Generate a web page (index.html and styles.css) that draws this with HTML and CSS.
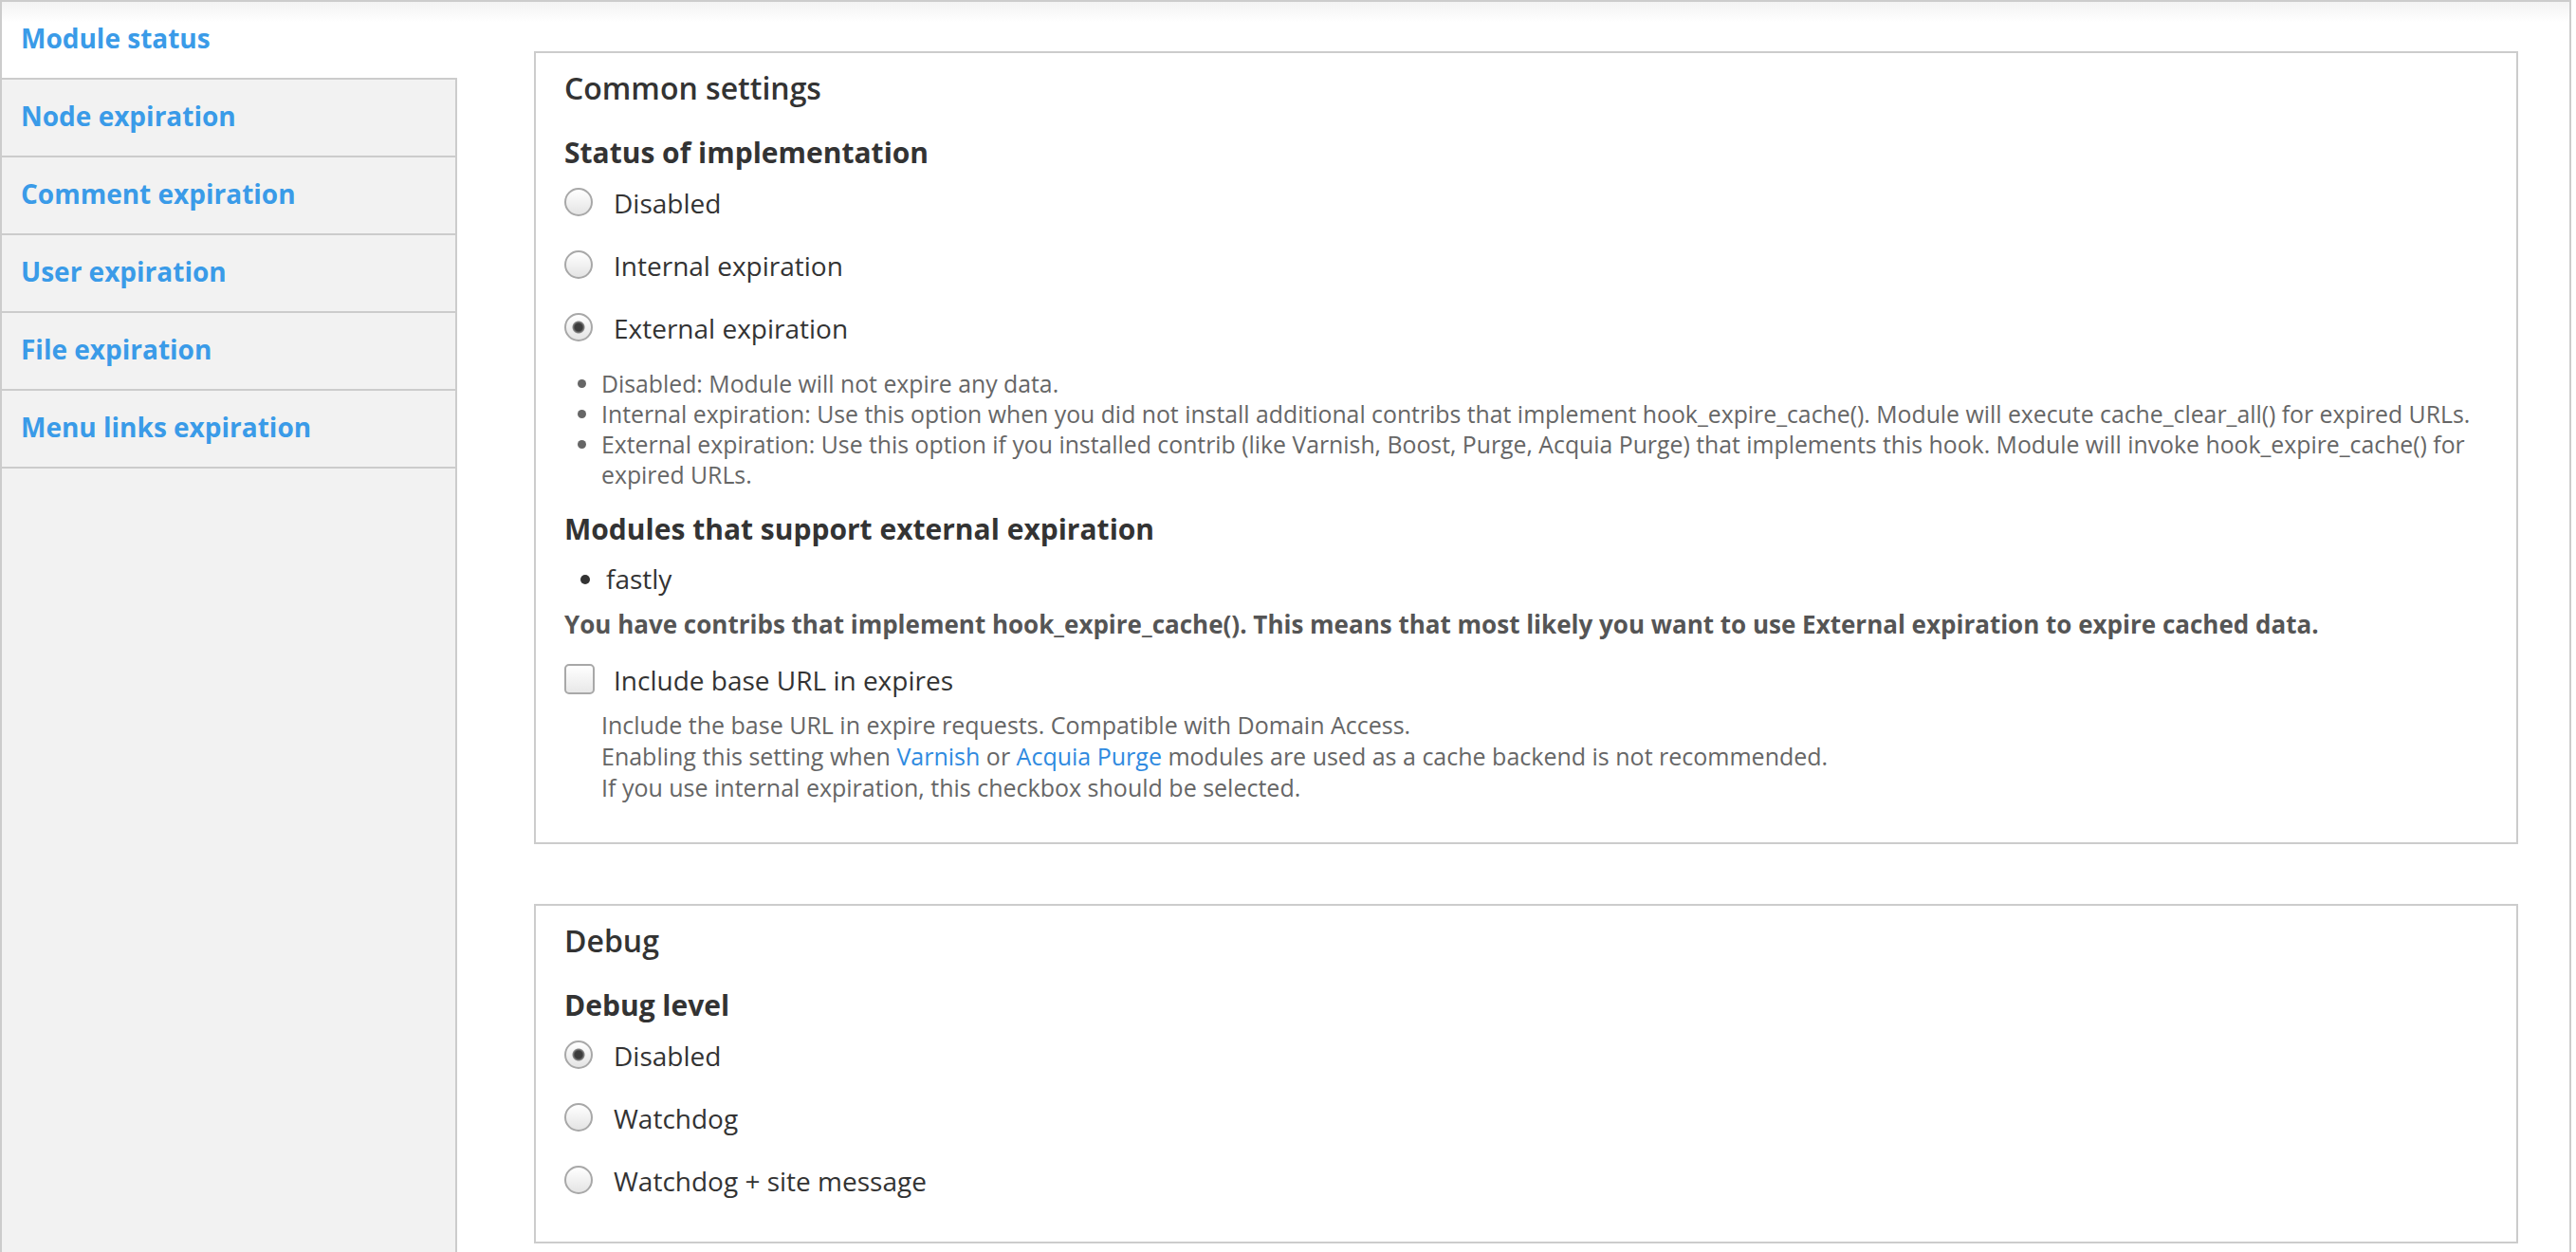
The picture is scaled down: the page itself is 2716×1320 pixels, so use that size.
FILE: index.html
```html
<!DOCTYPE html>
<html lang="en">
<head>
  <meta charset="UTF-8">
  <title>Cache Expiration</title>
  <link rel="stylesheet" href="styles.css">
</head>
<body>
  <div class="page">
    <ul class="tabs">
      <li class="tab active"><a href="#">Module status</a></li>
      <li class="tab"><a href="#">Node expiration</a></li>
      <li class="tab"><a href="#">Comment expiration</a></li>
      <li class="tab"><a href="#">User expiration</a></li>
      <li class="tab"><a href="#">File expiration</a></li>
      <li class="tab"><a href="#">Menu links expiration</a></li>
    </ul>

    <div class="pane">
      <div class="box box-common">
        <h2 class="legend">Common settings</h2>
        <div class="label">Status of implementation</div>
        <div class="options">
          <label class="option"><input type="radio" name="status"> Disabled</label>
          <label class="option"><input type="radio" name="status"> Internal expiration</label>
          <label class="option"><input type="radio" name="status" checked> External expiration</label>
        </div>
        <ul class="help">
          <li>Disabled: Module will not expire any data.</li>
          <li>Internal expiration: Use this option when you did not install additional contribs that implement hook_expire_cache(). Module will execute cache_clear_all() for expired URLs.</li>
          <li>External expiration: Use this option if you installed contrib (like Varnish, Boost, Purge, Acquia Purge) that implements this hook. Module will invoke hook_expire_cache() for expired URLs.</li>
        </ul>
        <div class="label label-modules">Modules that support external expiration</div>
        <ul class="modules">
          <li>fastly</li>
        </ul>
        <p class="notice">You have contribs that implement hook_expire_cache(). This means that most likely you want to use External expiration to expire cached data.</p>
        <label class="option check"><input type="checkbox"> Include base URL in expires</label>
        <div class="description">
          Include the base URL in expire requests. Compatible with Domain Access.<br>
          Enabling this setting when <a href="#">Varnish</a> or <a href="#">Acquia Purge</a> modules are used as a cache backend is not recommended.<br>
          If you use internal expiration, this checkbox should be selected.
        </div>
      </div>

      <div class="box box-debug">
        <h2 class="legend">Debug</h2>
        <div class="label">Debug level</div>
        <div class="options">
          <label class="option"><input type="radio" name="debug" checked> Disabled</label>
          <label class="option"><input type="radio" name="debug"> Watchdog</label>
          <label class="option"><input type="radio" name="debug"> Watchdog + site message</label>
        </div>
      </div>
    </div>
  </div>
</body>
</html>
```

FILE: styles.css
```css
* {
  box-sizing: border-box;
}

body {
  margin: 0;
  font-family: "Open Sans", sans-serif;
  color: #333;
  background: #fff;
}

.page {
  display: flex;
  min-height: 100vh;
  margin-right: 5px;
  border: 2px solid #ccc;
  border-bottom: none;
}

/* vertical tabs */
.tabs {
  flex: none;
  width: 480px;
  margin: 0;
  padding: 0;
  list-style: none;
  background: #f2f2f2;
  border-right: 2px solid #ccc;
}

.tab {
  border-bottom: 2px solid #ccc;
}

.tab a {
  display: block;
  padding: 20px 22px 24px 20px;
  line-height: 36px;
  font-size: 28px;
  font-weight: 700;
  color: #3a9be8;
  text-decoration: none;
}

.tab.active {
  margin-right: -2px;
  background: linear-gradient(#f3f3f3, #fff 22px);
}

/* content */
.pane {
  flex: 1;
  padding: 52px 54px 0 81px;
  background: linear-gradient(#f3f3f3, #fff 22px) no-repeat;
}

.box {
  border: 2px solid #ccc;
  padding: 17px 30px 41px;
  background: #fff;
}

.box-debug {
  margin-top: 63px;
  padding-bottom: 31px;
}

.legend {
  margin: 0;
  font-size: 32px;
  font-weight: 600;
  line-height: 40px;
}

.label {
  margin-top: 28px;
  font-size: 30px;
  font-weight: 700;
  line-height: 40px;
}

.option {
  display: flex;
  align-items: center;
  height: 66px;
  font-size: 28px;
}

.option input {
  appearance: none;
  -webkit-appearance: none;
  flex: none;
  width: 30px;
  height: 30px;
  margin: -2px 22px 0 0;
  border: 2px solid #a8a8a8;
  border-radius: 50%;
  background: linear-gradient(#fff, #e4e4e4);
}

.option input:checked {
  background: radial-gradient(circle, #3d3d3d 0 4px, #888 6px, transparent 7px), linear-gradient(#fff, #e4e4e4);
}

.option.check {
  height: 50px;
  margin-top: 16px;
}

.option input[type="checkbox"] {
  width: 32px;
  height: 32px;
  margin-right: 20px;
  border-radius: 5px;
  background: linear-gradient(#fff, #e8e8e8);
}

.help {
  margin: 9px 0 0;
  padding-left: 39px;
  font-size: 24.8px;
  line-height: 32px;
  color: #666;
}

.label-modules {
  margin-top: 22px;
}

.modules {
  margin: 12px 0 0;
  padding-left: 44px;
  font-size: 28px;
  line-height: 40px;
}

.notice {
  margin: 10px 0 0;
  font-size: 26px;
  font-weight: 700;
  line-height: 36px;
  color: #555;
}

.description {
  margin-top: 6px;
  padding-left: 39px;
  font-size: 25px;
  line-height: 33px;
  color: #666;
}

.description a {
  color: #2f8ae0;
  text-decoration: none;
}
```
